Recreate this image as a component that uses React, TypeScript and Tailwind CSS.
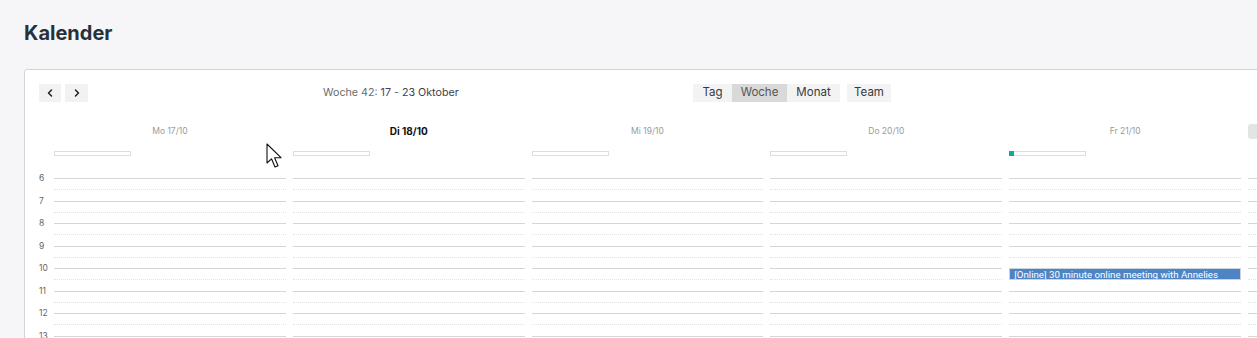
import { ChevronLeft, ChevronRight } from "lucide-react";

const days = [
  { label: "Mo 17/10" },
  { label: "Di 18/10", today: true },
  { label: "Mi 19/10" },
  { label: "Do 20/10" },
  { label: "Fr 21/10", busy: true },
  { label: "", extra: true },
];

const hours = [6, 7, 8, 9, 10, 11, 12, 13];

function Cursor() {
  return (
    <svg className="pointer-events-none absolute left-[266px] top-[143px]" width="20" height="28" viewBox="0 0 20 28">
      <path d="M1 1 L1 20 L5.5 15.8 L9 24 L12 22.7 L8.6 14.7 L15 14.7 Z" fill="#fff" stroke="#111" strokeWidth="1.1" strokeLinejoin="round" />
    </svg>
  );
}

export default function App() {
  return (
    <div className="relative h-[338px] w-[1257px] overflow-hidden bg-[#f6f6f8] font-['Inter',sans-serif]">
      <div className="pl-[24px] pt-[19px]">
        <h1 className="text-[20px] font-bold leading-[28px] text-[#27313d]">Kalender</h1>

        <div className="mt-[22px] w-[1500px] rounded-[3px] border border-[#d4d4d6] bg-white pl-[14px] pt-[14px]">
          <div className="flex h-[18px] items-center">
            <div className="flex gap-[4px]">
              <button className="grid h-[18px] w-[22px] place-items-center bg-[#f2f2f2] text-[#222]">
                <ChevronLeft size={12} strokeWidth={3} />
              </button>
              <button className="grid h-[18px] w-[23px] place-items-center bg-[#f2f2f2] text-[#222]">
                <ChevronRight size={12} strokeWidth={3} />
              </button>
            </div>
            <p className="ml-[235px] w-[135px] whitespace-nowrap text-[10.7px] text-[#6b6b6b]">
              Woche 42: <span className="text-[#4b3e63]">17</span> - <span className="text-[#3f3f4a]">23 Oktober</span>
            </p>
            <div className="ml-[235px] flex text-[11.5px] text-[#3a3a3a]">
              <button className="h-[18px] w-[39px] bg-[#f3f3f3]">Tag</button>
              <button className="h-[18px] w-[55px] bg-[#d9d9d9] text-[#555]">Woche</button>
              <button className="h-[18px] w-[53px] bg-[#f3f3f3]">Monat</button>
              <button className="ml-[7px] h-[18px] w-[44px] bg-[#f3f3f3]">Team</button>
            </div>
          </div>

          <div className="mt-[22px] flex">
            <div className="w-[15px] shrink-0" />
            <div className="grid grid-cols-[repeat(6,231.8px)] gap-x-[7px]">
              {days.map((d, i) => (
                <div key={i} className="flex h-[15px] items-center justify-center">
                  {d.extra ? (
                    <div className="mr-auto h-[15px] w-[14px] rounded-[3px] bg-[#e4e4e4]" />
                  ) : d.today ? (
                    <span className="text-[10px] font-bold text-[#111]">{d.label}</span>
                  ) : (
                    <span className="text-[8.5px] text-[#9a9a9a]">{d.label}</span>
                  )}
                </div>
              ))}
              {days.map((d, i) =>
                d.extra ? (
                  <div key={"a" + i} />
                ) : (
                  <div key={"a" + i} className="mt-[12px] flex h-[5px] w-[77px] border border-[#dedede]">
                    {d.busy && <div className="-my-px -ml-px h-[5px] w-[5px] bg-[#13a89e]" />}
                  </div>
                )
              )}
            </div>
          </div>

          <div className="mt-[22px] flex">
            <div className="flex w-[15px] shrink-0 flex-col">
              {hours.map((h) => (
                <div key={h} className="h-[22.5px]">
                  <span className="block -translate-y-1/2 text-[8.5px] leading-[10px] text-[#666]">{h}</span>
                </div>
              ))}
            </div>
            <div className="grid grid-cols-[repeat(6,231.8px)] gap-x-[7px]">
              {days.map((d, i) => (
                <div key={i} className="flex flex-col">
                  {hours.map((h) => (
                    <div key={h} className="h-[22.5px] border-t border-[#d6d6d6]">
                      <div className="h-[11px] border-b border-dotted border-[#e4e4e4]">
                        {d.busy && h === 10 && (
                          <div className="-mt-px h-[12px] truncate border border-[#c9d4e0] bg-[#4f84c4] pl-[4px] font-['Roboto',sans-serif] text-[9.7px] leading-[11px] text-white">
                            [Online] 30 minute online meeting with Annelies
                          </div>
                        )}
                      </div>
                    </div>
                  ))}
                </div>
              ))}
            </div>
          </div>
        </div>
      </div>
      <Cursor />
    </div>
  );
}
